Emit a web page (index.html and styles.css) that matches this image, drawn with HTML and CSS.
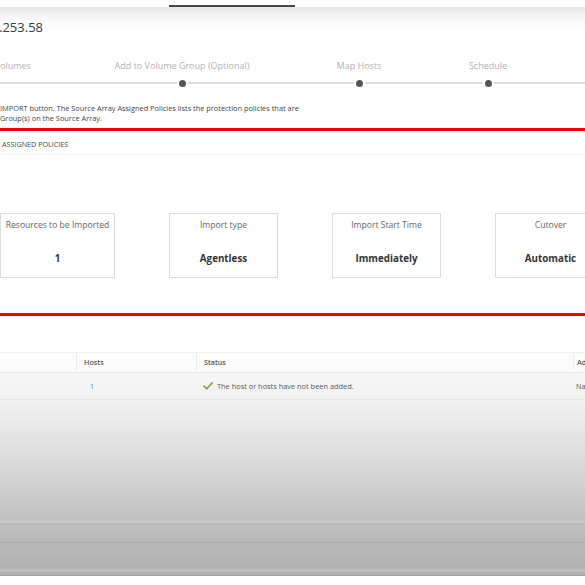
FILE: index.html
```html
<!DOCTYPE html>
<html>
<head>
  <link rel="stylesheet" href="styles.css">
</head>
<body>
  <div class="topbar">
    <div class="tab-line"></div>
  </div>

  <div class="head">
    <div class="array-ip">.253.58</div>
  </div>

  <div class="stepper">
    <div class="step step-volumes">
      <div class="step-label">olumes</div>
      <div class="step-track"></div>
    </div>
    <div class="step step-group">
      <div class="step-label">Add to Volume Group (Optional)</div>
      <div class="step-track"><span class="dot"></span></div>
    </div>
    <div class="step step-hosts">
      <div class="step-label">Map Hosts</div>
      <div class="step-track"><span class="dot"></span></div>
    </div>
    <div class="step step-schedule">
      <div class="step-label">Schedule</div>
      <div class="step-track"><span class="dot"></span></div>
    </div>
    <div class="step step-rest">
      <div class="step-label">&nbsp;</div>
      <div class="step-track"></div>
    </div>
  </div>

  <p class="description">
    IMPORT button. The Source Array Assigned Policies lists the protection policies that are<br>
    Group(s) on the Source Array.
  </p>

  <div class="red-rule"></div>

  <div class="policies-title">ASSIGNED POLICIES</div>

  <div class="summary-cards">
    <div class="card card-first">
      <div class="card-title">Resources to be Imported</div>
      <div class="card-value">1</div>
    </div>
    <div class="card">
      <div class="card-title">Import type</div>
      <div class="card-value">Agentless</div>
    </div>
    <div class="card">
      <div class="card-title">Import Start Time</div>
      <div class="card-value">Immediately</div>
    </div>
    <div class="card card-last">
      <div class="card-title">Cutover</div>
      <div class="card-value">Automatic</div>
    </div>
  </div>

  <div class="red-rule red-rule-lower"></div>

  <div class="hosts-area">
    <div class="hosts-row hosts-head">
      <div class="cell col-name"></div>
      <div class="cell col-hosts">Hosts</div>
      <div class="cell col-status">Status</div>
      <div class="cell col-extra">Ad</div>
    </div>
    <div class="hosts-row hosts-body">
      <div class="cell col-name"></div>
      <div class="cell col-hosts"><span class="host-count">1</span></div>
      <div class="cell col-status">
        <svg class="check" width="10" height="8" viewBox="0 0 10 8">
          <path d="M1 4.2 L3.8 6.8 L9 1" fill="none" stroke="#7aab3a" stroke-width="1.7" stroke-linecap="round" stroke-linejoin="round"/>
        </svg>
        The host or hosts have not been added.
      </div>
      <div class="cell col-extra">Na</div>
    </div>
    <div class="fill"></div>
    <div class="band band-a"></div>
    <div class="band band-b"></div>
    <div class="band band-c"></div>
    <div class="band band-d"></div>
  </div>
</body>
</html>
```

FILE: styles.css
```css
html, body {
  margin: 0;
  width: 585px;
  height: 585px;
  overflow: hidden;
  background: #fff;
}
body {
  font-family: "Open Sans", "DejaVu Sans", sans-serif;
  color: #444;
}
.topbar {
  height: 7px;
  padding-top: 5px;
  box-sizing: border-box;
  background: #fff;
}
.tab-line {
  margin-left: 169px;
  width: 126px;
  height: 2px;
  background: #4a4a4a;
}
.head {
  height: 28px;
  padding-top: 12px;
  box-sizing: border-box;
  background: linear-gradient(#e6e6e6, #fbfbfb 14px, #fff 22px);
}
.array-ip {
  font-size: 13px;
  line-height: 16px;
  color: #3a3a3a;
  margin-left: -1px;
}

/* wizard steps */
.stepper {
  display: flex;
  margin-top: 25px;
}
.step {
  flex: none;
  display: flex;
  flex-direction: column;
  align-items: center;
}
.step-volumes { width: 76px; align-items: flex-start; }
.step-group { width: 212px; }
.step-hosts { width: 142px; }
.step-schedule { width: 116px; }
.step-rest { flex: 1; min-width: 0; }
.step-label {
  font-size: 9px;
  line-height: 12px;
  color: #b3b3b3;
  white-space: nowrap;
}
.step-track {
  align-self: stretch;
  height: 8px;
  margin-top: 7px;
  display: flex;
  justify-content: center;
  align-items: center;
  background: linear-gradient(transparent 3px, #dedede 3px, #dedede 5px, transparent 5px);
}
.dot {
  width: 7px;
  height: 7px;
  border-radius: 50%;
  background: #555;
  box-shadow: 0 0 0 2px #fff;
}

.description {
  margin: 16px 0 0 0;
  font-size: 7.4px;
  line-height: 10px;
  color: #454545;
  white-space: nowrap;
}
.red-rule {
  height: 3px;
  margin-top: 5px;
  background: #f20000;
}
.red-rule-lower {
  margin-top: 35px;
}
.policies-title {
  padding: 8px 0 5px 2px;
  font-size: 7.2px;
  line-height: 10px;
  color: #4a4a4a;
  border-bottom: 1px solid #f3f3f3;
}

/* summary cards */
.summary-cards {
  display: flex;
  gap: 54px;
  margin-top: 58px;
}
.card {
  flex: none;
  width: 109px;
  height: 65px;
  box-sizing: border-box;
  border: 1px solid #dcdcdc;
  display: flex;
  flex-direction: column;
  align-items: center;
  padding-top: 5px;
}
.card-first {
  width: 115px;
}
.card-last {
  flex: 1;
  width: auto;
  border-right: none;
  padding-left: 20px;
}
.card-title {
  font-size: 8.6px;
  line-height: 12px;
  color: #666;
  white-space: nowrap;
}
.card-value {
  margin-top: 21px;
  font-size: 9.8px;
  line-height: 14px;
  font-weight: 700;
  color: #333;
}

/* hosts table + dimmed area */
.hosts-area {
  margin-top: 36px;
  height: 224px;
  background: linear-gradient(#fbfbfb, #f1f1f1 48px, #e2e2e2 90px, #cacaca 148px, #bcbcbc 180px, #b0b0b0 224px);
}
.hosts-row {
  display: flex;
  font-size: 7.2px;
  color: #555;
}
.hosts-head {
  height: 21px;
  padding-bottom: 2px;
  border-top: 1px solid #f0f0f0;
  border-bottom: 1px solid #e8e8e8;
  box-sizing: border-box;
  background: rgba(255, 255, 255, 0.55);
  font-weight: 600;
}
.hosts-body {
  height: 27px;
  border-bottom: 1px solid #e6e6e6;
  box-sizing: border-box;
}
.cell {
  display: flex;
  align-items: center;
  box-sizing: border-box;
  padding-left: 7px;
  white-space: nowrap;
}
.hosts-head .cell + .cell {
  border-left: 1px solid #ececec;
}
.col-name { width: 76px; }
.col-hosts { width: 120px; }
.col-status { width: 377px; }
.col-extra { flex: 1; min-width: 0; padding-left: 3px; }
.hosts-body .col-hosts { padding-left: 14px; }
.host-count {
  color: #4f89b0;
}
.check {
  margin-right: 4px;
}
.hosts-body .col-status {
  color: #5a5a5a;
  font-size: 7.4px;
}
.fill {
  height: 121px;
}
.band-a {
  height: 4px;
  border-top: 1px solid rgba(255, 255, 255, 0.25);
  border-bottom: 1px solid rgba(0, 0, 0, 0.06);
  box-sizing: border-box;
}
.band-b {
  height: 18px;
  border-bottom: 1px solid rgba(0, 0, 0, 0.05);
  box-sizing: border-box;
}
.band-c {
  height: 26px;
}
.band-d {
  height: 7px;
  border-top: 3px solid rgba(255, 255, 255, 0.18);
  border-bottom: 1px solid rgba(0, 0, 0, 0.08);
  box-sizing: border-box;
}
```
